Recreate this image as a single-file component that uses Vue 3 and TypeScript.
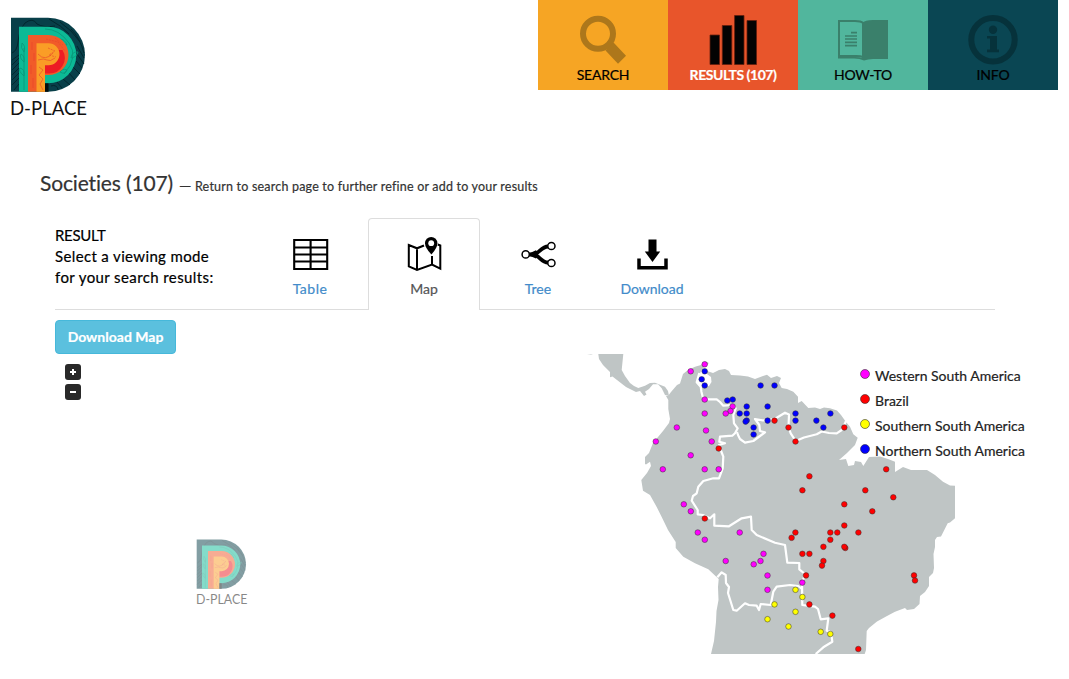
<script setup lang="ts">
type Point = [number, number]
interface Region { name: string; color: string; points: Point[] }

const regions: Region[] = [
  { name: 'Western South America', color: '#f0f', points: [
    [704.7, 364.3], [690.7, 371.3], [704.7, 399.5], [732.6, 406.5], [730.5, 411], [725.7, 413.5], [704.7, 413.5],
    [676.8, 427.5], [706, 430.5], [655.8, 441.5], [711.7, 441.5], [690.7, 455.3], [662.8, 469.3], [704.7, 469.3], [718.7, 469.3],
    [683.8, 504.3], [690.8, 511.3], [697.8, 532.5], [704.8, 539.7], [739.7, 532.5], [725.7, 561], [763.5, 553.8],
    [760.5, 561], [753.7, 564.3], [767.5, 575.5], [767.5, 589.8], [802.3, 582.6]] },
  { name: 'Brazil', color: '#f00', points: [
    [718.7, 448.5], [774.5, 420.6], [788.5, 427.5], [795.5, 441.5], [844.3, 427.5], [886.2, 469.3], [809.4, 476.3],
    [802.4, 490.3], [865.3, 490.3], [893.3, 497.3], [844.3, 504.3], [872.3, 511.3], [704.8, 518.5], [844.3, 525.5],
    [795.4, 532.5], [791.6, 537.8], [830.3, 532.5], [837.3, 532.5], [858.4, 532.5], [830.3, 539.7], [823.4, 546.8],
    [845.3, 548], [844.3, 546.8], [802.4, 553.8], [809.4, 553.8], [823.4, 561], [822, 565.6], [806, 575.4],
    [914, 575.4], [915, 580.5], [809.4, 604.4], [832.4, 615.6], [858.3, 649]] },
  { name: 'Southern South America', color: '#ff0', points: [
    [795.5, 589.8], [802.4, 597], [774.5, 604.4], [795.5, 611.8], [767.5, 619.2], [788.5, 626.5], [820.7, 631.8], [830.3, 634]] },
  { name: 'Northern South America', color: '#00f', points: [
    [704.7, 371.3], [701.7, 379.3], [704.7, 385.5], [760.6, 385.5], [774.5, 385.5], [727.3, 400.5], [732.7, 399.5],
    [739.7, 413.5], [746.7, 406.5], [746.7, 413.5], [746.7, 420.5], [745.6, 421.6], [753.6, 427.5], [753.6, 434.5],
    [767.6, 406.5], [767.6, 420.6], [795.5, 413.5], [795.5, 420.6], [816.4, 420.6], [823.4, 427.5], [830.4, 413.5]] },
]
</script>

<template>
  <main class="page">
    <svg class="defs" aria-hidden="true">
      <symbol id="brand" viewBox="0 0 78 104">
        <path d="M1 .8H38a37 37 0 0 1 0 74H1Z" fill="#083f49" />
        <g fill="none" stroke="#02272e" stroke-width="1">
          <path d="M2 36q5-2 6-11 1-12 7-19 8-6 12 1 7 4 18 2M2 43l7-5M2 48l7-7M2 53l7-7M2 58l7-7M2 63l7-7M2 68l7-7M4 73l5-6" />
          <path d="M39 2q13 7 20 15M50 5q12 8 20 20M61 12q9 9 13 24M67 29l7 12M67 37l7 10M66 44l6 7M63 50l7 7M59 56l6 7M53 62l7 6M47 65l5 6M41 69q6-2 7 4" />
        </g>
        <path d="M9 9.7H38a28.3 28.3 0 0 1 0 56.6H35V74.8H9Z" fill="#0cba96" />
        <path d="M14 73V31m0 28q-6-5-4-8q5 1 4 8m0-14q-5-4-3-8q4 2 3 8m0-10q-4-4-2-9q4 3 2 9M35 12q14 0 24 14t-5 31m3-29q-7-1-8-6q6 0 8 6m4 13q6-1 7-6q-6-1-7 6m-4 12q-5-2-7 2q5 3 7-2" fill="none" stroke="#079779" stroke-width=".8" />
        <path d="M18 18H38.5a20 20 0 0 1 0 40H35V74.8H18Z" fill="#f15b29" />
        <path d="M35 33H52.5A15.5 15.5 0 0 1 39 56.5H35Z" fill="#ed1c24" />
        <path d="M26.5 26.3H38.5a11 11 0 0 1 0 22H35V74.8H26.5Z" fill="#fa9d26" />
        <path d="M35 66.3H38.5V74.8H35Z" fill="#050f0f" />
        <g fill="none" stroke="#e7432b" stroke-width=".6">
          <path d="M22 25v8m2 3v8m-3 4v9m2 4v10M28 37q7 8 15-1M28 43q6-2 9 0t8-2M29 50l4 3-4 5 4 4-3 5 3 6" />
          <path d="M36 22l12 3 7 9M45 21l8 7M38 31l7 3-6 4 7 2" stroke-dasharray="2 1" />
        </g>
        <text x="0" y="98" textLength="77" lengthAdjust="spacingAndGlyphs" class="brand-name">D-PLACE</text>
      </symbol>
    </svg>

    <header class="top">
      <svg class="logo"><use href="#brand" /></svg>
      <nav class="nav">
        <a class="search">
          <svg viewBox="0 0 130 70"><circle cx="60" cy="33.8" r="15" fill="none" stroke="#ad771b" stroke-width="6" /><path d="M67.5 50.5l8-8L88 55.8 80 63.7z" fill="#ad771b" /></svg>
          <span>SEARCH</span>
        </a>
        <a class="results">
          <svg viewBox="0 0 130 70"><path d="M42 35h9.5v29.5H42zM54.3 25.5h9.5v39h-9.5zM66.6 15.5h9.4v49h-9.4zM79 20.5h9.5v44H79z" fill="#030303" stroke="#641e0c" stroke-width=".8" /></svg>
          <span>RESULTS (107)</span>
        </a>
        <a class="howto">
          <svg viewBox="0 0 130 70">
            <path d="M41 21h16q6 0 8 2v34q-2-1-7-1H41Z" fill="none" stroke="#3a806b" stroke-width="2" />
            <path d="M64 23q3-3 11-3h15v39H75q-5 0-9 1.5Q62 58.5 56 58.5H40V57h17q5 0 7 1Z" fill="#3a806b" />
            <path d="M53 32.7h6M47 36h12M47 39h12M47 42.3h12M47 45.6h12" stroke="#3a806b" stroke-width="1.7" />
          </svg>
          <span>HOW-TO</span>
        </a>
        <a class="info">
          <svg viewBox="0 0 130 70"><circle cx="65" cy="39.7" r="21.7" fill="none" stroke="#06323b" stroke-width="6" /><circle cx="65" cy="29.7" r="4.2" fill="#06323b" /><path d="M59 36h10v13.5h2v2.7H59v-2.7h3V38.5h-3z" fill="#06323b" /></svg>
          <span>INFO</span>
        </a>
      </nav>
    </header>

    <h1><span class="title">Societies (107)</span><span class="dash">—</span><small>Return to search page to further refine or add to your results</small></h1>

    <section class="content">
      <div class="tabs">
        <div class="intro"><span class="i1">RESULT</span><span class="i2">Select a viewing mode</span><span class="i3">for your search results:</span></div>
        <a class="tab">
          <svg viewBox="0 0 40 40"><path d="M4.2 5h33v29h-33zM4 12.5h34M4 19.5h34M4 26.5h34M20.6 5v29" fill="none" stroke="#000" stroke-width="2.1" /></svg>
          <span class="t-table">Table</span>
        </a>
        <a class="tab active">
          <svg viewBox="0 0 40 40"><path d="M20 10.5l-7 2.8L4.8 10v21.3L13 35l15-5.4 8.3 4.1V10.5l-2.5-1M13 13.5V35M28 21v8.5" fill="none" stroke="#000" stroke-width="2" /><path d="M27.2 2a6.2 6.2 0 0 1 6.2 6.2q0 4.5-6 11.4-6.4-7-6.4-11.4A6.2 6.2 0 0 1 27.2 2" /><circle cx="27.2" cy="8.2" r="2.9" fill="#fff" /></svg>
          <span class="t-map">Map</span>
        </a>
        <a class="tab">
          <svg viewBox="0 0 40 40"><path d="M10 19.5h5c6 0 8-8 15-8h3M15 19.5c6 0 8 8 15 8h3" fill="none" stroke="#000" stroke-width="3.8" /><path d="M11 18.4l7-3.2q4 4 0 8.4l-7-3z" /><g fill="#fff" stroke="#000" stroke-width="1.5"><circle cx="7.7" cy="19.4" r="3.6" /><circle cx="33.4" cy="11" r="3.6" /><circle cx="33.4" cy="28" r="3.6" /></g></svg>
          <span class="t-tree">Tree</span>
        </a>
        <a class="tab">
          <svg viewBox="0 0 40 40"><path d="M16.5 4.5h8v12h3.7L20.5 27l-7.7-10.5h3.7z" /><path d="M7 23.5v9.3h27v-9.3" fill="none" stroke="#000" stroke-width="3.5" /></svg>
          <span class="t-download">Download</span>
        </a>
      </div>

      <button class="export"><span>Download Map</span></button>

      <div class="map">
        <div class="zoom"><button aria-label="Zoom in"><i class="plus"></i></button><button aria-label="Zoom out"><i></i></button></div>
        <svg class="watermark"><use href="#brand" /></svg>
        <svg class="chart" viewBox="571 354 384 300">
          <path fill="#bfc5c5" d="M587 354h6l-2 .6zM598.3 354H623.3L621.7 370 625 376 630 383 634 386 638.3 388 645 385.7 650 383 655 382.7 665 386.7 668 391 669 396 665 395 661.7 388.3 658 384.3 653 384.3 649 389 645 391.7 646.5 394.5 644 396 640 391 636 392 626 387 617 380 612.5 376.5 610 377.3V372L603 365 599 359Z" />
          <path fill="#bfc5c5" d="M668 396L671 392 677 385 680 383.5 683 374 688 370 695 366.7 701 365 705 361.5 709 363 704 367 700.5 372 699 378 697 382 698 385 703 387.5 709 386 711.5 382 711 377 707 374 707 371 713 373 719 370 725 369 729 371 731 375 740 375.5 748 376.5 755 379 763 376 767 374.7 771 378 777 376 781 378 779 383 781.7 388 787 389 793.3 391.7 798 396.7 798 403 801.7 401 808.3 408 815 407.5 820 409 824 407.5 830 408.3 837 410.5 841 415 846 422 850 426.7 853.3 434.3 857.7 437.7 855 445 847 453 839 460 846 459 848.3 466 854 465 855 461 861 462 863.3 466 869 457 880 456.5 888 459 895 461.7 895 472 903 467 911 470 927 470 935 475 943 481.7 950 485.5 955 485.7V518.3L950 522.5 947.7 523.3 941 536.5 937 537 935 540 935 547 933.5 554 934 568 933 573 929 577 929 586 925 592 920 596 919.5 604 914 609 907 610 905 608 895 611.7 887 616 877 621.5 869 628 866.7 631 866 650 864.7 654H711L714 641 716 622 716.5 611 718.5 600 718 587 718.7 579 708.3 569.3 695 563.3 683.3 556.7 675.7 548V542L668 530 661.7 517 656.7 507 650 495 643 490.7 641.3 480 647 473 651 466 650 461.7 646 464.5 645 464V457L649 453 653 443 663 431 669 423 670 419 668.3 409V400L666 396Z" />
          <g class="borders">
            <path d="M699.3 373 696.7 382.3 700.7 386.7 701.5 392 702.7 397 708.3 399.3 716.7 399.3 720 402 723.3 405.7 733.3 405 735.7 408.3 733.3 415 734 423.3 737.7 428.3 735 433.3 732.3 435.7 720 436.7 719.3 441.7 725 443.3 719 445 720.7 450 723.3 456.7 722.7 468.3 719 478.3 713.3 478.3 703.3 481 698.3 486.7 696.7 493.3 693 496 691.7 500.7 697.7 510 697.7 514.3 703 515 710 518.3 714.3 514.3V525.7L729 526.3 741.7 518.3 751 516.7 751.7 530 756.7 535 775 542.7 785 545 787.3 562.7 799.3 563V569.3L805 574 802 583 802.3 605 815 606.7 818 609 820.7 619.3 828.3 618.3 826.7 630.7 831 632 832.3 641.7 823.3 647.3 815.7 654" />
            <path d="M737 432 738 435 740 439 745 442.7 753.3 441 760 436 765 432.3 760 431 759.3 425 755 419 766.7 421 776.7 417.7 785 412.7 789 414.5 788.5 427 790.7 433.3 795.7 441 804 437.5 816.7 434.3 821.7 431.5 829 433 836.7 433.3 841.7 430 844.3 425 846 421" />
            <path d="M717.3 577.3 721.7 572.3 725.7 575 726 583 729 587 728 593 733.3 610 736.7 610.7 745 603.3 749 605 756.7 605.7 759 610 760.7 604 770.7 605 773.3 591.7 776.7 586.7 790 585 798.3 586 802 589" />
          </g>
          <g v-for="region in regions" :key="region.name" :fill="region.color">
            <circle v-for="([x, y], i) in region.points" :key="i" :cx="x" :cy="y" r="2.8" />
          </g>
        </svg>
        <ul class="legend">
          <li v-for="region in regions" :key="region.name">
            <svg viewBox="0 0 10 10"><circle cx="5" cy="5" r="4.5" :fill="region.color" stroke="#333" stroke-width=".6" /></svg>
            <span>{{ region.name }}</span>
          </li>
        </ul>
      </div>
    </section>
  </main>
</template>

<style>
body { margin: 0; background: #fff; }
</style>

<style scoped>
* { box-sizing: border-box; }
.page { width: 1069px; height: 679px; overflow: hidden; font-family: Lato, "Open Sans", sans-serif; color: #333; -webkit-text-stroke: .2px currentColor; }
.defs { display: block; width: 0; height: 0; }
.brand-name { font: 19.5px Lato, sans-serif; fill: #111; -webkit-text-stroke: 0; }
.top { height: 171px; display: flex; justify-content: space-between; padding: 0 11px 0 10px; }
.logo { width: 78px; height: 104px; margin-top: 17px; }
.nav { display: flex; height: 90px; }
.nav a { width: 130px; height: 90px; color: #000; text-align: center; font-size: 14px; line-height: 18px; letter-spacing: -.2px; }
.nav svg { display: block; width: 130px; height: 70px; margin-bottom: -4px; }
.search { background: #f6a524; }
.results { background: #e8552b; }
.nav .results { color: #fff; font-weight: 700; letter-spacing: -.45px; }
.howto { background: #51b69d; }
.info { background: #0a4653; }
h1 { display: flex; align-items: baseline; margin: 0; padding-left: 40px; height: 47px; font-size: 21px; font-weight: 400; line-height: 23px; white-space: nowrap; }
.title { width: 139px; letter-spacing: -.15px; }
.dash { width: 16px; font-size: 12.5px; transform: scaleX(1.25); transform-origin: left; }
small { font-size: 12.5px; letter-spacing: .2px; }
.content { width: 940px; margin-left: 55px; }
.tabs { display: flex; height: 92px; border-bottom: 1px solid #ddd; }
.intro { width: 199px; padding-top: 7px; color: #000; font-size: 15px; line-height: 21px; white-space: nowrap; }
.intro span { display: table; }
.i1 { letter-spacing: -.3px; }
.i2 { letter-spacing: .36px; }
.i3 { letter-spacing: .4px; }
.t-table { letter-spacing: .5px; }
.tab { width: 112px; margin-right: 2px; height: 92px; padding-top: 17px; color: #428bca; font-size: 14px; line-height: 20px; display: flex; flex-direction: column; align-items: center; }
.tab svg { width: 40px; height: 40px; margin-bottom: 4px; }
.tab.active { color: #555; border: 1px solid #ddd; border-bottom: 0; border-radius: 4px 4px 0 0; background: #fff; padding-top: 16px; }
.export { display: block; margin-top: 10px; width: 121px; height: 34px; padding: 0; color: #fff; background: #5bc0de; border: 1px solid #46b8da; border-radius: 4px; font: 700 14px/20px Lato, sans-serif; }
.map { position: relative; height: 300px; }
.zoom { position: absolute; left: 10px; top: 10px; display: grid; gap: 4px; }
.zoom button { width: 16px; height: 16px; padding: 0; border: 0; border-radius: 3px; background: #292929; display: grid; place-items: center; }
.zoom i { width: 6px; height: 2px; background: #fff; }
.zoom .plus { height: 6px; clip-path: polygon(33% 0, 67% 0, 67% 33%, 100% 33%, 100% 67%, 67% 67%, 67% 100%, 33% 100%, 33% 67%, 0 67%, 0 33%, 33% 33%); }
.watermark { position: absolute; left: 141px; top: 185px; width: 52px; height: 69.3px; opacity: .5; }
.chart { position: absolute; left: 516px; top: 0; width: 384px; height: 300px; }
.chart circle { stroke: #333; stroke-width: .5; }
.borders { fill: none; stroke: #fff; stroke-width: 2.2; stroke-linejoin: round; }
.legend { position: absolute; left: 805px; top: 9px; margin: 0; padding: 0; list-style: none; font-size: 14px; line-height: 25px; color: #222; white-space: nowrap; }
.legend li { display: flex; gap: 5px; height: 25px; }
.legend svg { width: 10px; height: 10px; margin-top: 6px; }
</style>
